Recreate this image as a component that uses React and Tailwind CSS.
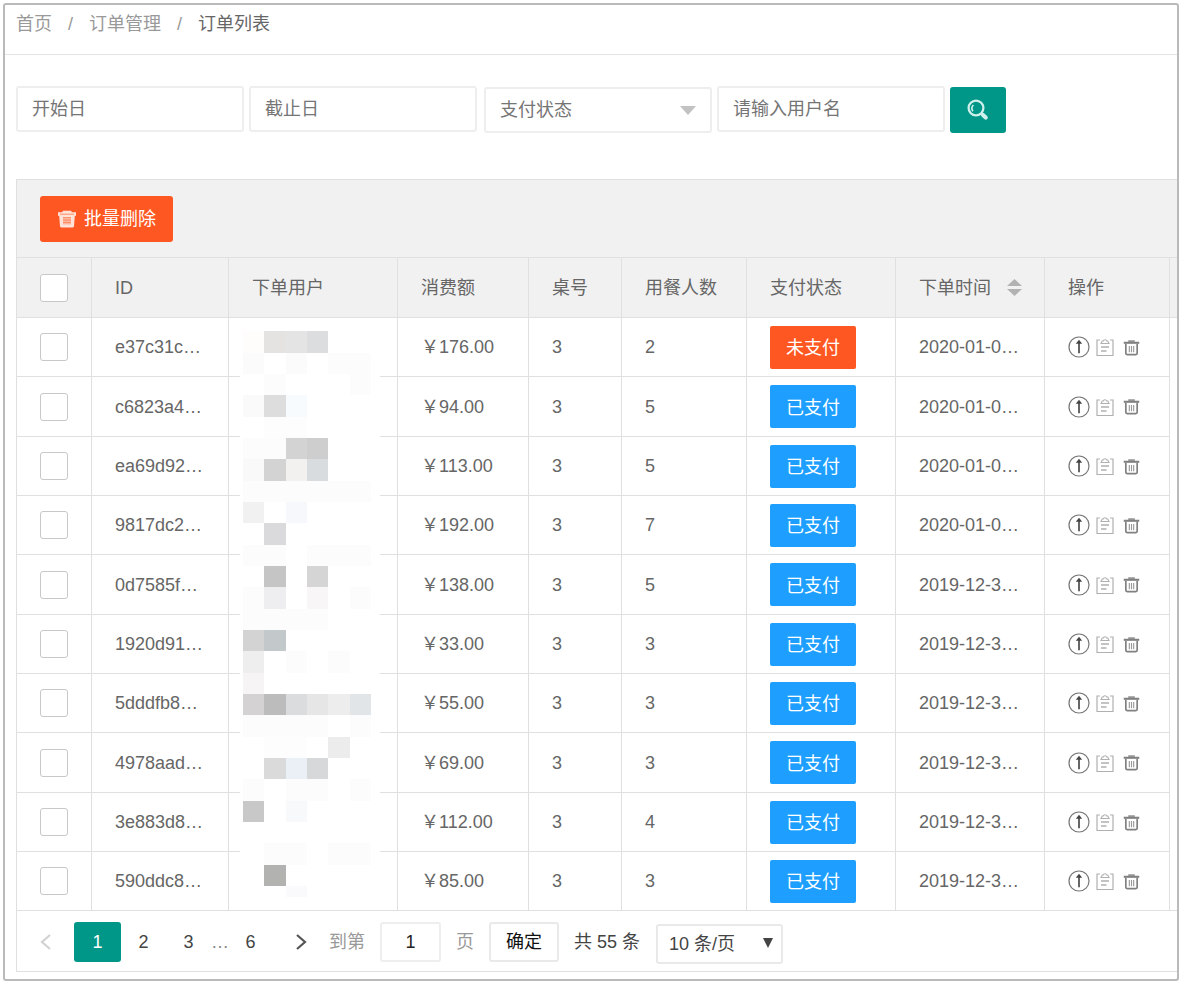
import React from "react";

const orders = [
  { id: "e37c31c…", amount: "176.00", table: 3, guests: 2, paid: false, time: "2020-01-0…" },
  { id: "c6823a4…", amount: "94.00", table: 3, guests: 5, paid: true, time: "2020-01-0…" },
  { id: "ea69d92…", amount: "113.00", table: 3, guests: 5, paid: true, time: "2020-01-0…" },
  { id: "9817dc2…", amount: "192.00", table: 3, guests: 7, paid: true, time: "2020-01-0…" },
  { id: "0d7585f…", amount: "138.00", table: 3, guests: 5, paid: true, time: "2019-12-3…" },
  { id: "1920d91…", amount: "33.00", table: 3, guests: 3, paid: true, time: "2019-12-3…" },
  { id: "5dddfb8…", amount: "55.00", table: 3, guests: 3, paid: true, time: "2019-12-3…" },
  { id: "4978aad…", amount: "69.00", table: 3, guests: 3, paid: true, time: "2019-12-3…" },
  { id: "3e883d8…", amount: "112.00", table: 3, guests: 4, paid: true, time: "2019-12-3…" },
  { id: "590ddc8…", amount: "85.00", table: 3, guests: 3, paid: true, time: "2019-12-3…" },
];

// Mosaic over the user names: [column, row, colour]
const mosaic = [
  [0, 0, "#fefdfc"], [1, 0, "#e5e3e2"], [2, 0, "#e4e4e4"], [3, 0, "#dcddde"],
  [0, 1, "#fbfbfb"], [2, 1, "#fbfbfb"], [4, 1, "#fcfcfc"], [5, 1, "#fcfcfc"],
  [1, 2, "#fcfcfc"], [5, 2, "#fcfcfc"],
  [0, 3, "#fbfafa"], [1, 3, "#dddddd"], [2, 3, "#f8fbfe"],
  [1, 4, "#fdfdfd"], [2, 4, "#fdfdfd"],
  [0, 5, "#fcfcfc"], [1, 5, "#fcfcfc"], [2, 5, "#d3d3d3"], [3, 5, "#cecece"],
  [0, 6, "#f9f9f9"], [1, 6, "#d4d3d3"], [2, 6, "#f2f1f0"], [3, 6, "#d8dcdf"],
  [0, 7, "#fcfcfc"], [1, 7, "#fcfcfc"], [2, 7, "#fcfcfc"], [3, 7, "#fcfcfc"], [4, 7, "#fcfcfc"], [5, 7, "#fcfcfc"],
  [0, 8, "#f1f1f1"], [2, 8, "#f6f8fb"],
  [1, 9, "#dadadc"],
  [0, 10, "#fcfcfc"], [1, 10, "#fcfcfc"], [3, 10, "#fcfcfc"], [4, 10, "#fcfcfc"], [5, 10, "#fcfcfc"],
  [1, 11, "#c5c5c5"], [3, 11, "#d6d5d6"],
  [0, 12, "#fcfcfc"], [1, 12, "#eeeef0"], [3, 12, "#f8f6f7"], [5, 12, "#fcfcfc"],
  [0, 13, "#fcfcfc"], [1, 13, "#fcfcfc"], [2, 13, "#fcfcfc"], [3, 13, "#fcfcfc"],
  [0, 14, "#d3d3d3"], [1, 14, "#c3c8cb"],
  [0, 15, "#eeeeee"], [2, 15, "#fcfcfc"], [4, 15, "#fcfcfc"],
  [0, 16, "#f6f4f5"],
  [0, 17, "#d5d2d3"], [1, 17, "#bdbcbc"], [2, 17, "#dadcde"], [3, 17, "#e6e6e6"], [4, 17, "#ededed"], [5, 17, "#e2e5e8"],
  [0, 18, "#fcfcfc"], [1, 18, "#fcfcfc"], [2, 18, "#fcfcfc"], [3, 18, "#fcfcfc"], [5, 18, "#fcfcfc"],
  [1, 19, "#fdfdfd"], [2, 19, "#fdfdfd"], [4, 19, "#ececec"],
  [1, 20, "#dadada"], [2, 20, "#eaf0f5"], [3, 20, "#d7d8da"],
  [0, 21, "#fcfcfc"], [2, 21, "#fcfcfc"], [3, 21, "#fcfcfc"], [5, 21, "#fcfcfc"],
  [0, 22, "#c8c8c8"], [2, 22, "#f8f9fb"],
  [1, 24, "#fcfcfc"], [2, 24, "#fcfcfc"], [4, 24, "#fcfcfc"], [5, 24, "#fcfcfc"],
  [1, 25, "#b2b3b1"],
  [2, 26, "#fafafc"],
];

const columns = ["ID", "下单用户", "消费额", "桌号", "用餐人数", "支付状态", "下单时间", "操作"];

function Mosaic() {
  return (
    <svg
      className="absolute top-[11px] left-[11px] h-[568px] w-[140px]"
      viewBox="0 0 420 1704"
      shapeRendering="crispEdges"
      aria-hidden="true"
    >
      <rect width="420" height="1704" fill="#fff" />
      {mosaic.map(([x, y, fill]) => (
        <rect key={`${x}-${y}`} x={9 + 64 * x} y={7 + 64 * y} width="64" height="64" fill={fill} />
      ))}
    </svg>
  );
}

function SearchIcon() {
  return (
    <svg className="h-[22px] w-[22px]" viewBox="0 0 22 22" fill="none" stroke="#d0f0ec" aria-hidden="true">
      <circle cx="9" cy="9" r="7.4" strokeWidth="2.3" />
      <path d="M5.900 12.200a4.800 4.800 0 0 1 .5-6.200" strokeWidth="1.600" />
      <path d="M14.300 14.300l2 2" strokeWidth="2" />
      <path d="M16 16l2.700 2.500" strokeWidth="4.200" strokeLinecap="round" />
    </svg>
  );
}

function BinIcon() {
  return (
    <svg className="h-5 w-5" viewBox="0 0 20 20" aria-hidden="true">
      <path d="M6 1.8h8l.8 1.4H19v3.6h-1.2L17 17.2a1.6 1.6 0 0 1-1.6 1.4H4.6A1.6 1.6 0 0 1 3 17.2L2.200 6.800H1V3.200h4.200z" fill="#ffe3d9" />
      <path d="M3 5.200h14" stroke="#ff8a62" strokeWidth="1" />
      <path d="M6 8.500h8v7H6z" fill="#ffb59b" />
      <path d="M6 8.500h8M6 11h8M6 13.500h8" stroke="#ff8a62" strokeWidth=".9" />
    </svg>
  );
}

function UpIcon() {
  return (
    <svg className="h-[22px] w-[22px]" viewBox="0 0 22 22" fill="none" aria-hidden="true">
      <circle cx="11" cy="11" r="10" stroke="#777" strokeWidth="1.2" />
      <path d="M11 6v11.200" stroke="#666" strokeWidth="2" />
      <path d="M11 3.800l3.200 4H7.800z" fill="#444" />
    </svg>
  );
}

function NoteIcon() {
  return (
    <svg className="h-5 w-[18px]" viewBox="0 0 18 20" fill="none" stroke="#b0b0b0" aria-hidden="true">
      <path d="M4 3H1v15.500h16V3h-3" strokeWidth="1.200" />
      <path d="M5 6.500L6.200 4h1a1.900 1.900 0 0 1 3.600 0h1L13 6.500z" strokeWidth="1.100" />
      <path d="M5 10h8M5 14h5.500" strokeWidth="1.400" />
    </svg>
  );
}

function TrashIcon() {
  return (
    <svg className="h-[17px] w-[17px]" viewBox="0 0 18 18" fill="none" stroke="#808080" aria-hidden="true">
      <path d="M.8 4h16.400" strokeWidth="2.200" />
      <path d="M5.500 2.200h7" strokeWidth="1.500" />
      <path d="M3 5v10.200a1.300 1.300 0 0 0 1.300 1.300h9.400a1.300 1.300 0 0 0 1.300-1.300V5" strokeWidth="1.800" />
      <path d="M6.700 7.500V14M9 7.500V14M11.300 7.500V14" strokeWidth="1.200" stroke="#999" />
    </svg>
  );
}

function Chevron({ d, color }) {
  return (
    <svg className="h-4 w-[11px]" viewBox="0 0 11 16" fill="none" stroke={color} strokeWidth="2.200" aria-hidden="true">
      <path d={d} />
    </svg>
  );
}

function Check({ label }) {
  return (
    <input
      type="checkbox"
      aria-label={label}
      className="block h-7 w-7 appearance-none rounded-[3px] border border-[#c8c8c8] bg-white checked:bg-[#009688]"
    />
  );
}

const field =
  "h-[46px] w-[228px] rounded-[3px] border-2 border-[#eeeeee] bg-white px-[14px] text-[#757575] placeholder:text-[#757575] outline-none";
const cell = "border-r border-b border-[#e0e0e0] p-0 pl-[23px] text-left font-normal whitespace-nowrap";

export default function App() {
  return (
    <div className="bg-white pt-[3px] pr-[2px] pb-[2px] pl-[3px] font-['Liberation_Sans','Noto_Sans_CJK_SC',sans-serif] text-[18px] leading-6 text-[#666]">
      <div className="rounded-[3px] border-2 border-[#bababa] pb-[7px]">
        <nav aria-label="breadcrumb" className="flex h-[50px] items-start gap-4 border-b border-[#e4e4e4] pt-[7px] pl-[11px] text-[#999]">
          <a href="#home">首页</a>
          <span>/</span>
          <a href="#orders">订单管理</a>
          <span>/</span>
          <span className="text-[#666]" aria-current="page">订单列表</span>
        </nav>

        <main className="pl-[11px]">
          <form className="mt-[31px] flex h-[47px] items-start gap-[5px]" onSubmit={(e) => e.preventDefault()}>
            <input className={field} aria-label="开始日" placeholder="开始日" />
            <input className={field} aria-label="截止日" placeholder="截止日" />
            <div className="relative ml-[2px] self-end">
              <select className={`${field} block appearance-none`} aria-label="支付状态" defaultValue="">
                <option value="">支付状态</option>
                <option value="paid">已支付</option>
                <option value="unpaid">未支付</option>
              </select>
              <svg className="pointer-events-none absolute top-[19px] right-4 h-[9px] w-4" viewBox="0 0 16 9" aria-hidden="true">
                <path d="M0 0h16L8 9z" fill="#c2c2c2" />
              </svg>
            </div>
            <input className={field} aria-label="用户名" placeholder="请输入用户名" />
            <button
              type="submit"
              aria-label="搜索"
              className="flex h-[46px] w-14 items-center justify-center self-end rounded-[3px] bg-[#009688]"
            >
              <SearchIcon />
            </button>
          </form>

          <section className="mt-[46px] border-b border-l border-[#e0e0e0]">
            <div className="flex h-[79px] items-center border-t border-b border-[#e0e0e0] bg-[#f1f1f1] pl-[23px]">
              <button type="button" className="flex h-[46px] w-[133px] items-center justify-center gap-[7px] rounded-[3px] bg-[#ff5722] text-white">
                <BinIcon />
                <span>批量删除</span>
              </button>
            </div>

            <table className="w-full table-fixed border-separate border-spacing-0">
              <colgroup>
                <col className="w-[75px]" />
                <col className="w-[137px]" />
                <col className="w-[169px]" />
                <col className="w-[131px]" />
                <col className="w-[93px]" />
                <col className="w-[125px]" />
                <col className="w-[149px]" />
                <col className="w-[149px]" />
                <col />
                <col className="w-[7px]" />
              </colgroup>
              <thead>
                <tr className="h-[60px] bg-[#f1f1f1]">
                  <th className={cell}>
                    <Check label="全选" />
                  </th>
                  {columns.map((name) => (
                    <th key={name} scope="col" className={cell}>
                      {name === "下单时间" ? (
                        <button type="button" className="flex items-center gap-4">
                          {name}
                          <svg className="h-[17px] w-[15px]" viewBox="0 0 15 17" fill="#b2b2b2" aria-hidden="true">
                            <path d="M7.500 0L15 7H0zM0 10h15l-7.500 7z" />
                          </svg>
                        </button>
                      ) : (
                        name
                      )}
                    </th>
                  ))}
                  <td className="border-b border-[#e0e0e0] p-0" />
                </tr>
              </thead>
              <tbody>
                {orders.map((o, i) => (
                  <tr key={o.id} className="h-[59px] nth-[3n+2]:h-[60px]">
                    <td className={cell}>
                      <Check label={`选择 ${o.id}`} />
                    </td>
                    <td className={cell}>{o.id}</td>
                    <td className={cell}>
                      {i === 0 && (
                        <div className="relative -mt-[57px] -ml-[23px] h-0">
                          <div className="absolute top-[28px] left-0">
                            <Mosaic />
                          </div>
                        </div>
                      )}
                    </td>
                    <td className={cell}>￥{o.amount}</td>
                    <td className={cell}>{o.table}</td>
                    <td className={cell}>{o.guests}</td>
                    <td className={cell}>
                      <button
                        type="button"
                        className={`block h-[43px] w-[86px] rounded-[2px] pt-[2px] text-white ${o.paid ? "bg-[#1e9fff]" : "bg-[#ff5722]"}`}
                      >
                        {o.paid ? "已支付" : "未支付"}
                      </button>
                    </td>
                    <td className={cell}>{o.time}</td>
                    <td className={cell}>
                      <div className="flex items-center">
                        <button type="button" aria-label="上移"><UpIcon /></button>
                        <button type="button" aria-label="详情" className="ml-[6px]"><NoteIcon /></button>
                        <button type="button" aria-label="删除" className="ml-[9px]"><TrashIcon /></button>
                      </div>
                    </td>
                    {i === orders.length - 1 ? <td className="border-b border-[#e0e0e0] p-0" /> : null}
                  </tr>
                ))}
              </tbody>
            </table>

            <nav aria-label="分页" className="flex h-[60px] items-start pt-[11px] text-[#444]">
              <div className="flex h-10 items-center">
                <button type="button" aria-label="上一页" className="flex w-[57px] justify-center">
                  <Chevron d="M10 1L2 8l8 7" color="#d2d2d2" />
                </button>
                <button type="button" aria-current="page" className="h-10 w-[47px] rounded-[3px] bg-[#009688] text-white">1</button>
                <button type="button" className="w-[45px]">2</button>
                <button type="button" className="w-[45px]">3</button>
                <span className="w-[17px] text-center text-[#888]">…</span>
                <button type="button" className="w-[45px]">6</button>
                <button type="button" aria-label="下一页" className="flex w-14 justify-center">
                  <Chevron d="M1 1l8 7-8 7" color="#555" />
                </button>
                <label htmlFor="page-number" className="text-[#999]">到第</label>
                <input
                  id="page-number"
                  defaultValue="1"
                  className="mx-[15px] h-10 w-[61px] rounded-[3px] border-2 border-[#eeeeee] text-center text-[#222] outline-none"
                />
                <span className="text-[#999]">页</span>
                <button type="button" className="mx-[15px] h-10 w-[70px] rounded-[3px] border-2 border-[#e9e9e9] text-[#111]">确定</button>
                <span>共 55 条</span>
              </div>
              <div className="relative mt-[2px] ml-4">
                <select aria-label="每页条数" className="block h-10 w-[127px] appearance-none rounded-[3px] border-2 border-[#e9e9e9] bg-white pl-[11px] outline-none">
                  <option>10 条/页</option>
                  <option>20 条/页</option>
                  <option>30 条/页</option>
                </select>
                <svg className="pointer-events-none absolute top-[14px] right-[10px] h-[10px] w-[10px]" viewBox="0 0 10 10" aria-hidden="true">
                  <path d="M0 0h10L5 10z" fill="#444" />
                </svg>
              </div>
            </nav>
          </section>
        </main>
      </div>
    </div>
  );
}
